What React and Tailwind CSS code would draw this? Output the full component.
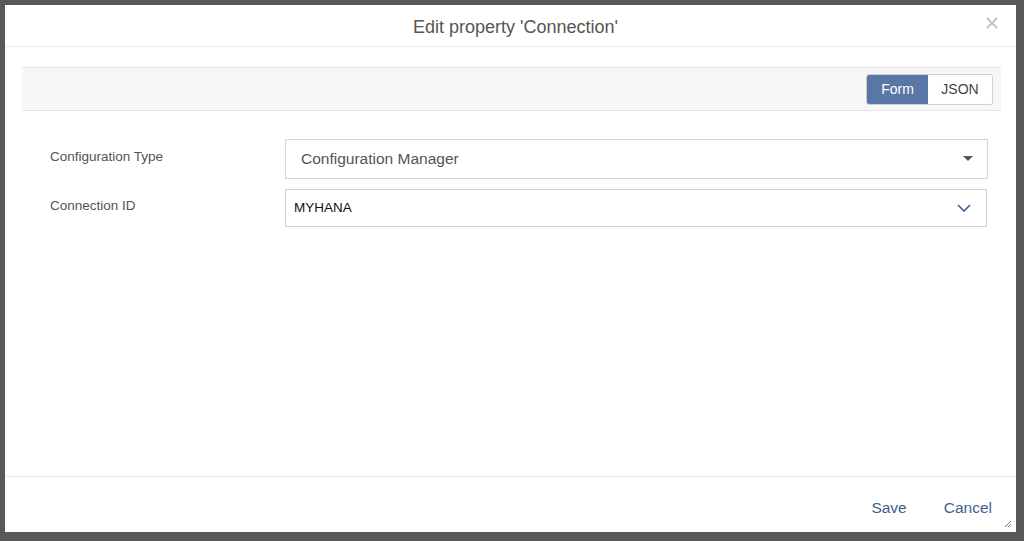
import { useState } from "react";

const FormRow = ({ label, children, className = "" }) => (
  <div className={`flex items-center ${className}`}>
    <label className="w-[263px] shrink-0 pl-[28px] pb-[4px] text-[13.5px] text-[#555]">{label}</label>
    {children}
  </div>
);

const App = () => {
  const [mode, setMode] = useState("form");

  return (
    <div
      className="w-[1024px] h-[541px] bg-[#585858] pl-[5px] pt-[5px] pr-[8px] pb-[9px]"
      style={{ fontFamily: '"Liberation Sans", Arial, sans-serif' }}
    >
      <div className="h-full bg-white flex flex-col">
        {/* header */}
        <div className="relative h-[42px] flex items-center justify-center border-b border-[#ececec] shrink-0">
          <h1 className="text-[18px] text-[#555] pl-[10px] pt-[4px]">Edit property 'Connection'</h1>
          <button className="absolute right-[18px] top-[12px] text-[#c4c4c4]">
            <svg width="12" height="12" viewBox="0 0 12 12">
              <path d="M1 1 L11 11 M11 1 L1 11" stroke="currentColor" strokeWidth="2" />
            </svg>
          </button>
        </div>

        {/* body */}
        <div className="flex-1 pl-[17px] pr-[15px] pt-[20px]">
          <div className="h-[44px] bg-[#f7f7f7] border-y border-[#e4e4e4] flex items-center justify-end pr-[8px]">
            <div className="flex h-[31px] rounded-[3px] border border-[#cfcfcf] overflow-hidden text-[14px]">
              <button
                onClick={() => setMode("form")}
                className={`w-[61px] ${mode === "form" ? "bg-[#5876a6] text-white" : "bg-white text-[#333]"}`}
              >
                Form
              </button>
              <button
                onClick={() => setMode("json")}
                className={`w-[64px] ${mode === "json" ? "bg-[#5876a6] text-white" : "bg-white text-[#444]"}`}
              >
                JSON
              </button>
            </div>
          </div>

          <div className="pt-[28px] pr-[13px]">
            <FormRow label="Configuration Type">
              <div className="flex-1 h-[40px] border border-[#d6d6d6] flex items-center justify-between pl-[15px] pr-[14px]">
                <span className="text-[15.5px] text-[#555]">Configuration Manager</span>
                <svg width="10" height="6" viewBox="0 0 10 6">
                  <path d="M0 0 H10 L5 5 Z" fill="#555" />
                </svg>
              </div>
            </FormRow>
            <FormRow label="Connection ID" className="mt-[10px]">
              <div className="flex-1 h-[38px] border border-[#d0d0d0] flex items-center justify-between pl-[8px] pr-[15px] mr-[1px]">
                <span className="text-[13.5px] text-[#111]">MYHANA</span>
                <svg width="14" height="8" viewBox="0 0 14 8">
                  <path d="M1 1 L7 7 L13 1" fill="none" stroke="#3d5d8c" strokeWidth="1.6" />
                </svg>
              </div>
            </FormRow>
          </div>
        </div>

        {/* footer */}
        <div className="relative h-[56px] border-t border-[#e6e6e6] flex items-center justify-end pr-[24px] gap-[37px] shrink-0">
          <button className="text-[15.5px] text-[#3f5f8f] pt-[6px]">Save</button>
          <button className="text-[15.5px] text-[#3f5f8f] pt-[6px]">Cancel</button>
          <svg className="absolute right-[4px] bottom-[4px]" width="8" height="8" viewBox="0 0 8 8">
            <path d="M7 1 L1 7 M7 4 L4 7 M7 6.5 L6.5 7" stroke="#777" strokeWidth="1" />
          </svg>
        </div>
      </div>
    </div>
  );
};

export default App;
